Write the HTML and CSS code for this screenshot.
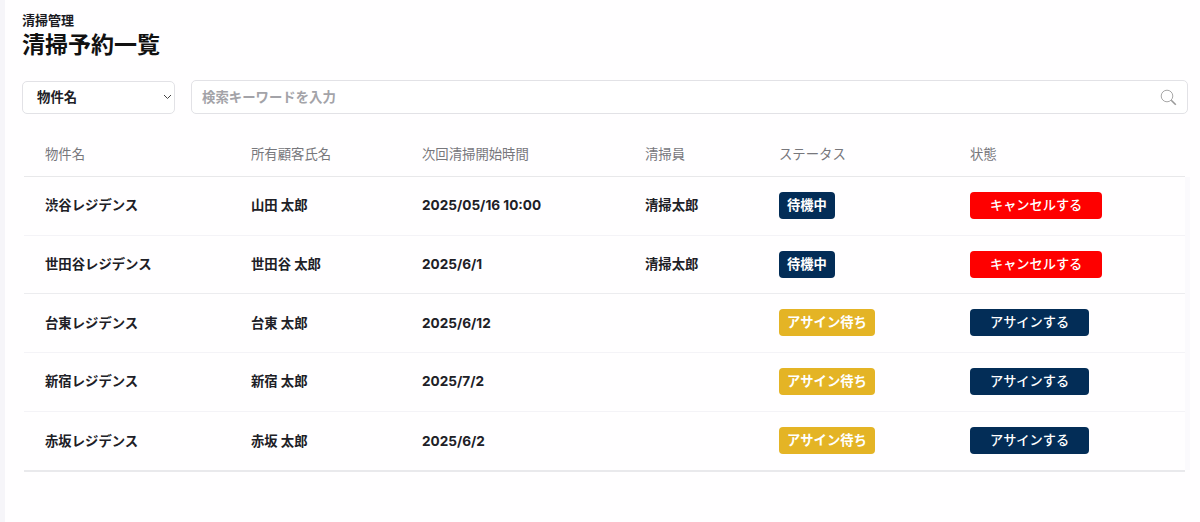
FILE: index.html
```html
<!DOCTYPE html>
<html lang="ja">
<head>
<meta charset="utf-8">
<title>清掃予約一覧</title>
<link rel="stylesheet" href="styles.css">
</head>
<body>
<aside class="rail"></aside>
<main class="content">
  <p class="crumb">清掃管理</p>
  <h1 class="title">清掃予約一覧</h1>
  <div class="filters">
    <div class="select"><span>物件名</span>
      <svg class="chev" width="9" height="6" viewBox="0 0 9 6"><path d="M1 1l3.5 3.5L8 1" fill="none" stroke="#444" stroke-width="1"/></svg>
    </div>
    <div class="search"><span>検索キーワードを入力</span>
      <svg class="glass" width="17" height="17" viewBox="0 0 17 17"><circle cx="7" cy="7" r="5.8" fill="none" stroke="#a8a8a8" stroke-width="1"/><path d="M11.2 11.2l4.6 4.6" stroke="#999" stroke-width="1.6" fill="none"/></svg>
    </div>
  </div>
  <div class="table">
    <div class="row head">
      <div>物件名</div><div>所有顧客氏名</div><div>次回清掃開始時間</div><div>清掃員</div><div>ステータス</div><div>状態</div>
    </div>
    <div class="row">
      <div>渋谷レジデンス</div><div>山田 太郎</div><div class="date">2025/05/16 10:00</div><div>清掃太郎</div>
      <div><span class="badge navy">待機中</span></div><div><span class="btn red">キャンセルする</span></div>
    </div>
    <div class="row">
      <div>世田谷レジデンス</div><div>世田谷 太郎</div><div class="date">2025/6/1</div><div>清掃太郎</div>
      <div><span class="badge navy">待機中</span></div><div><span class="btn red">キャンセルする</span></div>
    </div>
    <div class="row">
      <div>台東レジデンス</div><div>台東 太郎</div><div class="date">2025/6/12</div><div></div>
      <div><span class="badge gold">アサイン待ち</span></div><div><span class="btn navy">アサインする</span></div>
    </div>
    <div class="row">
      <div>新宿レジデンス</div><div>新宿 太郎</div><div class="date">2025/7/2</div><div></div>
      <div><span class="badge gold">アサイン待ち</span></div><div><span class="btn navy">アサインする</span></div>
    </div>
    <div class="row">
      <div>赤坂レジデンス</div><div>赤坂 太郎</div><div class="date">2025/6/2</div><div></div>
      <div><span class="badge gold">アサイン待ち</span></div><div><span class="btn navy">アサインする</span></div>
    </div>
  </div>
</main>
</body>
</html>
```

FILE: styles.css
```css
* { box-sizing: border-box; }
html, body { margin: 0; height: 100%; }
body {
  display: flex;
  height: 522px;
  overflow: hidden;
  background: #fffeff;
  color: #202026;
  font-family: Inter, "Noto Sans CJK JP", sans-serif;
}
.rail { width: 5px; flex: none; background: #f6f5f9; }
.content { flex: 1; padding: 12px 12px 0 17px; min-width: 0; }
.crumb { margin: 0; font-size: 13px; line-height: 16px; font-weight: 700; color: #1a1a1f; }
.title { margin: 2px 0 0; font-size: 23px; line-height: 30px; font-weight: 700; color: #111; }
.filters { display: flex; gap: 16px; margin-top: 20px; align-items: center; }
.select, .search {
  display: flex;
  align-items: center;
  justify-content: space-between;
  background: #fff;
  border: 1px solid #e2e2e6;
  border-radius: 5px;
  font-size: 13.4px;
  line-height: 18px;
}
.select { width: 153px; height: 33px; padding: 0 1px 0 14px; font-weight: 700; }
.chev { margin-right: 1px; }
.search { flex: 1; height: 34px; padding: 0 10px 0 10px; color: #a3a3a8; font-weight: 600; }
.table {
  margin: 23px 3px 0 2px;
  border-bottom: 2px solid #e9e9ec;
}
.row {
  display: grid;
  grid-template-columns: 206px 171px 223px 134px 191px 1fr;
  align-items: center;
  height: 58.7px;
  padding: 0 0 1px 21px;
  border-bottom: 1px solid #f4f3f7;
  box-shadow: 5px 0 0 #fbfafd;
  font-size: 13.35px;
  line-height: 20px;
  font-weight: 700;
}
.row:nth-child(3) { border-bottom-color: #ececef; }
.row:last-child { border-bottom: 0; }
.row.head {
  height: 40px;
  padding-bottom: 5px;
  font-weight: 400;
  color: #77777c;
  border-bottom-color: #e8e8ea;
  box-shadow: none;
}
.date { font-size: 13.6px; }
.badge, .btn {
  display: inline-block;
  height: 27px;
  line-height: 27px;
  border-radius: 4px;
  color: #fff;
  vertical-align: middle;
}
.badge { padding: 0 8px; font-size: 13.3px; font-weight: 700; }
.btn { padding: 0 20px; font-size: 13.2px; font-weight: 500; }
.navy { background: #032d57; }
.gold { background: #e4b425; }
.red { background: #fe0000; }
```
